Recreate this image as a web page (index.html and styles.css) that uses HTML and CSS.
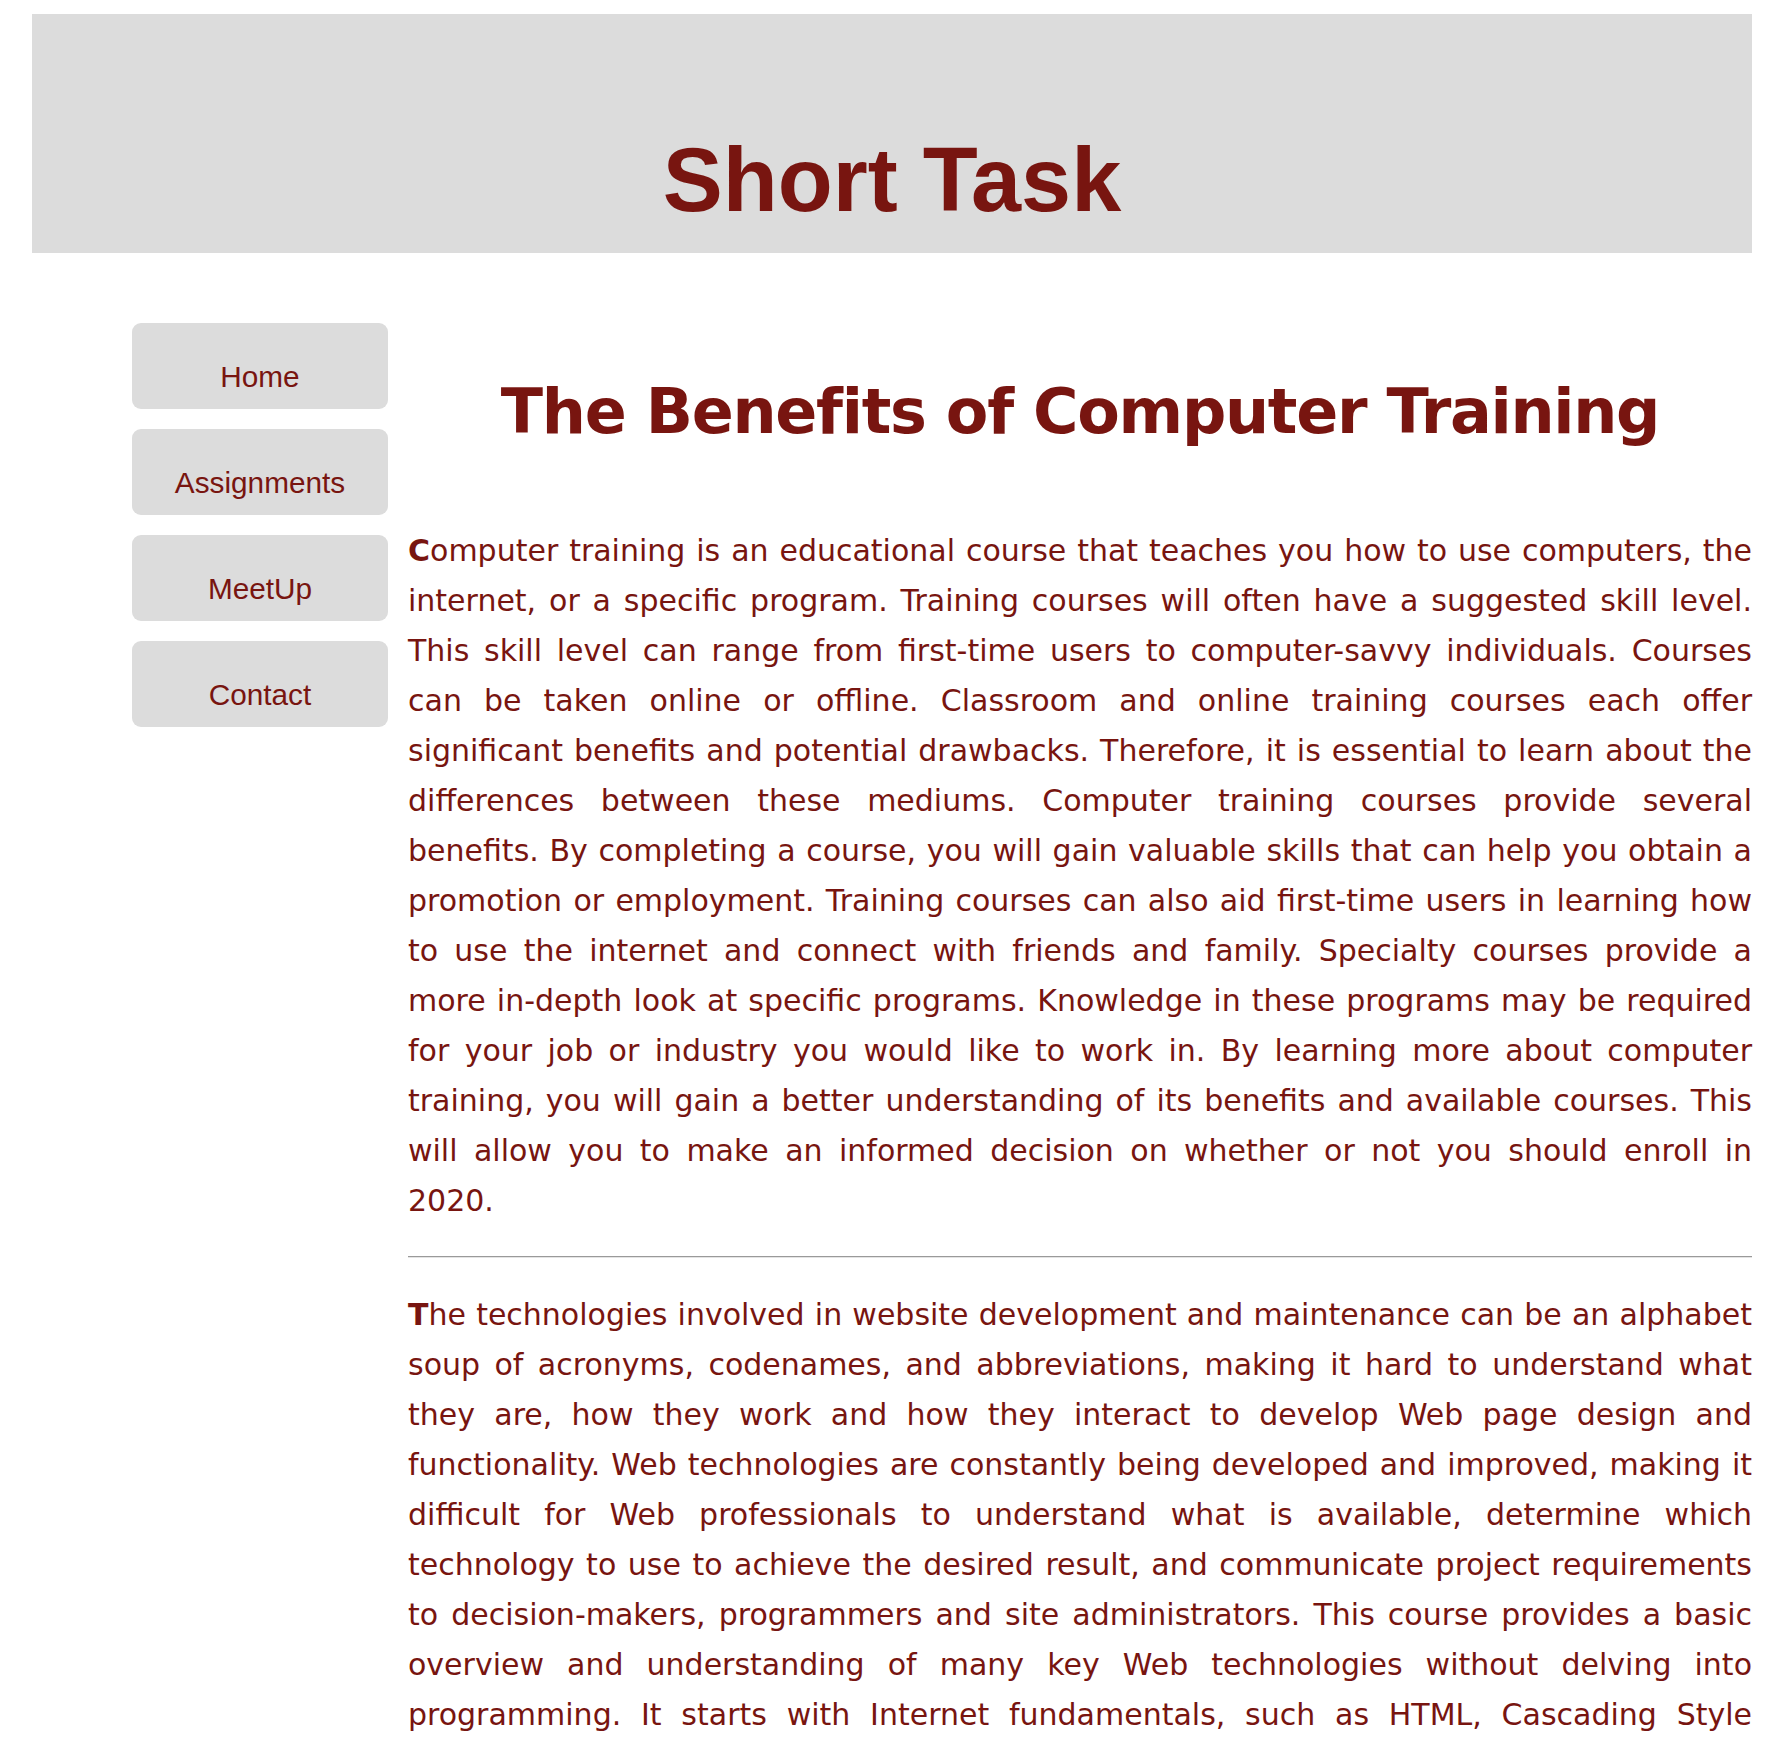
FILE: index.html
```html
<!DOCTYPE html>
<html lang="en">
<head>
<meta charset="utf-8">
<title>Short Task</title>
<link rel="stylesheet" href="styles.css">
</head>
<body>
<header class="site-header">
  <h1 class="site-title">Short Task</h1>
</header>
<div class="layout">
  <nav class="side-nav">
    <a class="nav-link" href="#">Home</a>
    <a class="nav-link" href="#">Assignments</a>
    <a class="nav-link" href="#">MeetUp</a>
    <a class="nav-link" href="#">Contact</a>
  </nav>
  <main class="content">
    <h2 class="page-title">The Benefits of Computer Training</h2>
    <p class="para">Computer training is an educational course that teaches you how to use computers, the internet, or a specific program. Training courses will often have a suggested skill level. This skill level can range from first-time users to computer-savvy individuals. Courses can be taken online or offline. Classroom and online training courses each offer significant benefits and potential drawbacks. Therefore, it is essential to learn about the differences between these mediums. Computer training courses provide several benefits. By completing a course, you will gain valuable skills that can help you obtain a promotion or employment. Training courses can also aid first-time users in learning how to use the internet and connect with friends and family. Specialty courses provide a more in-depth look at specific programs. Knowledge in these programs may be required for your job or industry you would like to work in. By learning more about computer training, you will gain a better understanding of its benefits and available courses. This will allow you to make an informed decision on whether or not you should enroll in 2020.</p>
    <hr class="divider">
    <p class="para">The technologies involved in website development and maintenance can be an alphabet soup of acronyms, codenames, and abbreviations, making it hard to understand what they are, how they work and how they interact to develop Web page design and functionality. Web technologies are constantly being developed and improved, making it difficult for Web professionals to understand what is available, determine which technology to use to achieve the desired result, and communicate project requirements to decision-makers, programmers and site administrators. This course provides a basic overview and understanding of many key Web technologies without delving into programming. It starts with Internet fundamentals, such as HTML, Cascading Style Sheets (CSS), and JavaScript, and then moves on to databases, content management systems and the tools used to build and maintain modern websites.</p>
  </main>
</div>
</body>
</html>
```

FILE: styles.css
```css
html, body {
  margin: 0;
  padding: 0;
  background: #ffffff;
}

body {
  color: #781510;
  font-family: "DejaVu Sans", Verdana, sans-serif;
}

.site-header {
  margin: 14px 40px 0 32px;
  background: #dcdcdc;
  padding: 114px 0 21px;
  height: 104px;
}

.site-title {
  margin: 0;
  font-family: "Liberation Sans", Arial, Helvetica, sans-serif;
  font-weight: bold;
  font-size: 90px;
  line-height: 104px;
  text-align: center;
  color: #781510;
}

.layout {
  display: flex;
  align-items: flex-start;
  gap: 20px;
  margin: 70px 40px 0 132px;
}

.side-nav {
  flex: 0 0 256px;
  display: flex;
  flex-direction: column;
  gap: 20px;
}

.nav-link {
  display: block;
  background: #dcdcdc;
  border-radius: 9px;
  padding: 38px 0 16px;
  height: 32px;
  font-family: "Liberation Sans", Arial, Helvetica, sans-serif;
  font-size: 29.75px;
  line-height: 32px;
  text-align: center;
  text-decoration: none;
  color: #781510;
}

.content {
  flex: 1 1 auto;
  min-width: 0;
}

.page-title {
  margin: 52px 0 0;
  font-family: "DejaVu Sans", Verdana, sans-serif;
  font-weight: bold;
  font-size: 62px;
  letter-spacing: -1.3px;
  line-height: 74px;
  text-align: center;
  color: #781510;
}

.para {
  margin: 77px 0 30px;
  font-size: 30px;
  word-spacing: 0.6px;
  line-height: 50px;
  text-align: justify;
}

.para::first-letter {
  font-weight: bold;
}

.divider {
  margin: 30px 0;
  border: 0;
  border-top: 1px solid #9a9a9a;
  border-bottom: 1px solid #e4e4e4;
  height: 0;
}

.divider + .para {
  margin-top: 32px;
}
```
